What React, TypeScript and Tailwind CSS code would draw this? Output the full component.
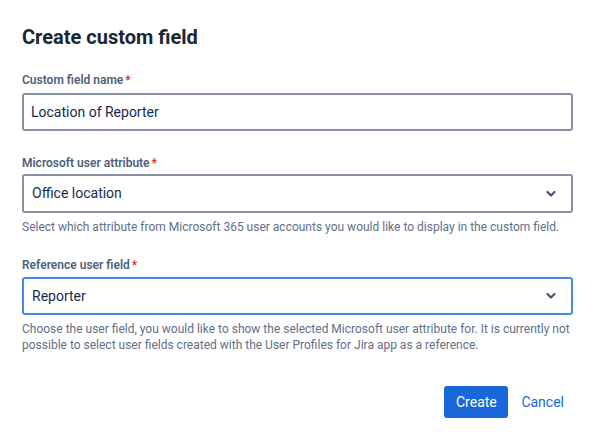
import React from "react";

const font = { fontFamily: 'Roboto, "Noto Sans", sans-serif' };

function Chevron() {
  return (
    <svg width="12" height="8" viewBox="0 0 12 8" className="shrink-0">
      <path d="M2.5 2 L6 5.5 L9.5 2" fill="none" stroke="#44546f" strokeWidth="2.2" strokeLinecap="round" strokeLinejoin="round" />
    </svg>
  );
}

function Label({ children }: { children: React.ReactNode }) {
  return (
    <div className="text-[12px] leading-[16px] font-semibold text-[#505f79]">
      {children}
      <span className="text-[#c9372c] ml-[2px]">*</span>
    </div>
  );
}

export default function App() {
  return (
    <div className="w-[596px] h-[441px] bg-white pl-[22px] pr-[23px] pt-[25px] flex flex-col" style={font}>
      <h1 className="text-[20px] leading-[24px] font-bold text-[#1d2633]">Create custom field</h1>

      <div className="mt-[23px]">
        <Label>Custom field name</Label>
        <div className="mt-[5px] h-[38px] border-2 border-[#8590a2] rounded-[3px] flex items-center px-[7px] text-[14px] text-[#172b4d]">
          Location of Reporter
        </div>
      </div>

      <div className="mt-[24px]">
        <Label>Microsoft user attribute</Label>
        <div className="mt-[3px] h-[39px] border-2 border-[#8590a2] rounded-[3px] flex items-center justify-between pl-[8px] pr-[14px] text-[14px] text-[#172b4d]">
          <span>Office location</span>
          <Chevron />
        </div>
        <div className="mt-[6px] text-[12px] leading-[16px] text-[#626f86] whitespace-nowrap">
          Select which attribute from Microsoft 365 user accounts you would like to display in the custom field.
        </div>
      </div>

      <div className="mt-[22px]">
        <Label>Reference user field</Label>
        <div className="mt-[4px] h-[38px] border-2 border-[#4688ec] rounded-[3px] flex items-center justify-between pl-[8px] pr-[14px] text-[14px] text-[#172b4d]">
          <span>Reporter</span>
          <Chevron />
        </div>
        <div className="mt-[6px] text-[12px] leading-[16px] text-[#626f86]">
          Choose the user field, you would like to show the selected Microsoft user attribute for. It is currently not possible to select user fields created with the User Profiles for Jira app as a reference.
        </div>
      </div>

      <div className="mt-[33px] flex justify-end items-center gap-[4px]">
        <button className="h-[32px] w-[64px] rounded-[3px] bg-[#1868db] text-white text-[14px]">Create</button>
        <button className="h-[32px] px-[9px] text-[#1868db] text-[14px]">Cancel</button>
      </div>
    </div>
  );
}
